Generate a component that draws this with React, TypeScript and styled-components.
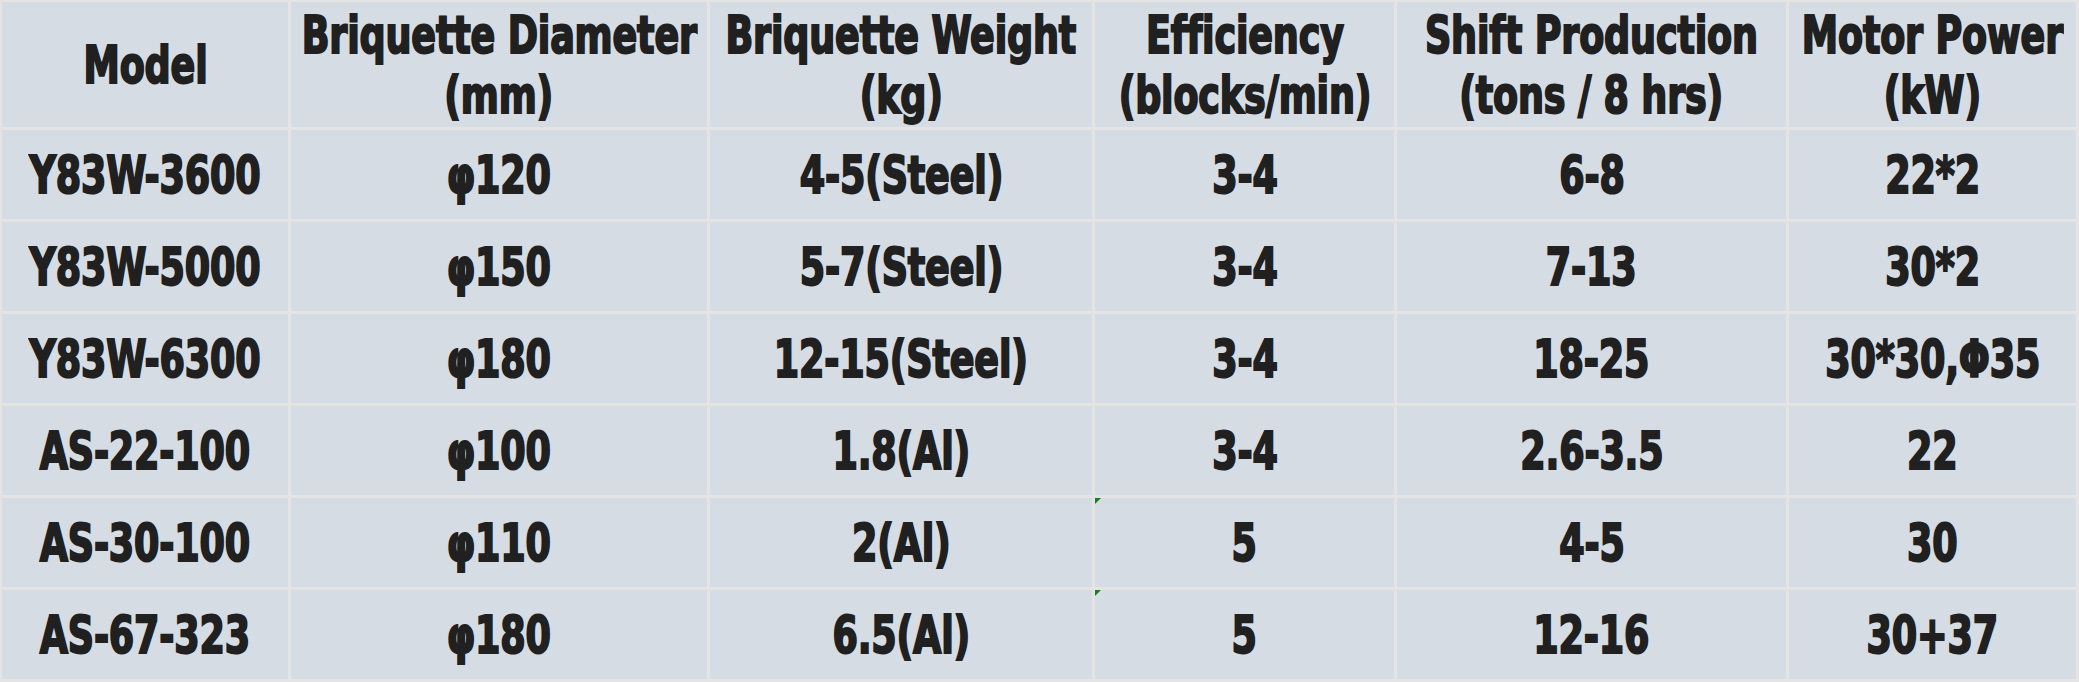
import React from 'react';
import styled, { createGlobalStyle } from 'styled-components';

const GlobalStyle = createGlobalStyle`
  html, body {
    margin: 0;
    padding: 0;
    background: #e4e4e4;
  }
  body {
    font-family: "DejaVu Sans Condensed", "DejaVu Sans", "Liberation Sans", sans-serif;
  }
`;

const Table = styled.div`
  display: grid;
  grid-template-columns: 286px 416px 382px 299px 389px 287px;
  grid-template-rows: 125px repeat(6, 89px);
  gap: 3px;
  padding: 2px 3px 3px 2px;
  width: 2079px;
  height: 682px;
  box-sizing: border-box;
  background: #e4e4e4;
`;

const Cell = styled.div`
  position: relative;
  display: flex;
  align-items: center;
  justify-content: center;
  background: #d5dce4;
  color: #202020;
  font-size: 52px;
  font-weight: 700;
  line-height: 1;
  white-space: nowrap;
`;

const HeadCell = styled(Cell)`
  flex-direction: column;
  line-height: 60px;
`;

// no Impact here, so squeeze a bold face and thicken it
const Text = styled.span`
  display: inline-block;
  transform: scaleX(0.78);
  -webkit-text-stroke: 2px #202020;
  letter-spacing: -0.2px;
`;

// little green error marker Excel puts in a cell corner
const Marker = styled.span`
  position: absolute;
  top: 0;
  left: 0;
  width: 0;
  height: 0;
  border-top: 6px solid #16801a;
  border-right: 6px solid transparent;
`;

const headers: string[][] = [
  ['Model'],
  ['Briquette Diameter', '(mm)'],
  ['Briquette Weight', '(kg)'],
  ['Efficiency', '(blocks/min)'],
  ['Shift Production', '(tons / 8 hrs)'],
  ['Motor Power', '(kW)'],
];

const rows: string[][] = [
  ['Y83W-3600', 'φ120', '4-5(Steel)', '3-4', '6-8', '22*2'],
  ['Y83W-5000', 'φ150', '5-7(Steel)', '3-4', '7-13', '30*2'],
  ['Y83W-6300', 'φ180', '12-15(Steel)', '3-4', '18-25', '30*30,Φ35'],
  ['AS-22-100', 'φ100', '1.8(Al)', '3-4', '2.6-3.5', '22'],
  ['AS-30-100', 'φ110', '2(Al)', '5', '4-5', '30'],
  ['AS-67-323', 'φ180', '6.5(Al)', '5', '12-16', '30+37'],
];

const App: React.FC = () => {
  return (
    <>
      <GlobalStyle />
      <Table>
        {headers.map((lines, i) => (
          <HeadCell key={`h${i}`}>
            {lines.map((l) => (
              <Text key={l}>{l}</Text>
            ))}
          </HeadCell>
        ))}
        {rows.map((row, r) =>
          row.map((val, c) => (
            <Cell key={`${r}-${c}`}>
              {c === 3 && r >= 4 && <Marker />}
              <Text>{val}</Text>
            </Cell>
          ))
        )}
      </Table>
    </>
  );
};

export default App;
